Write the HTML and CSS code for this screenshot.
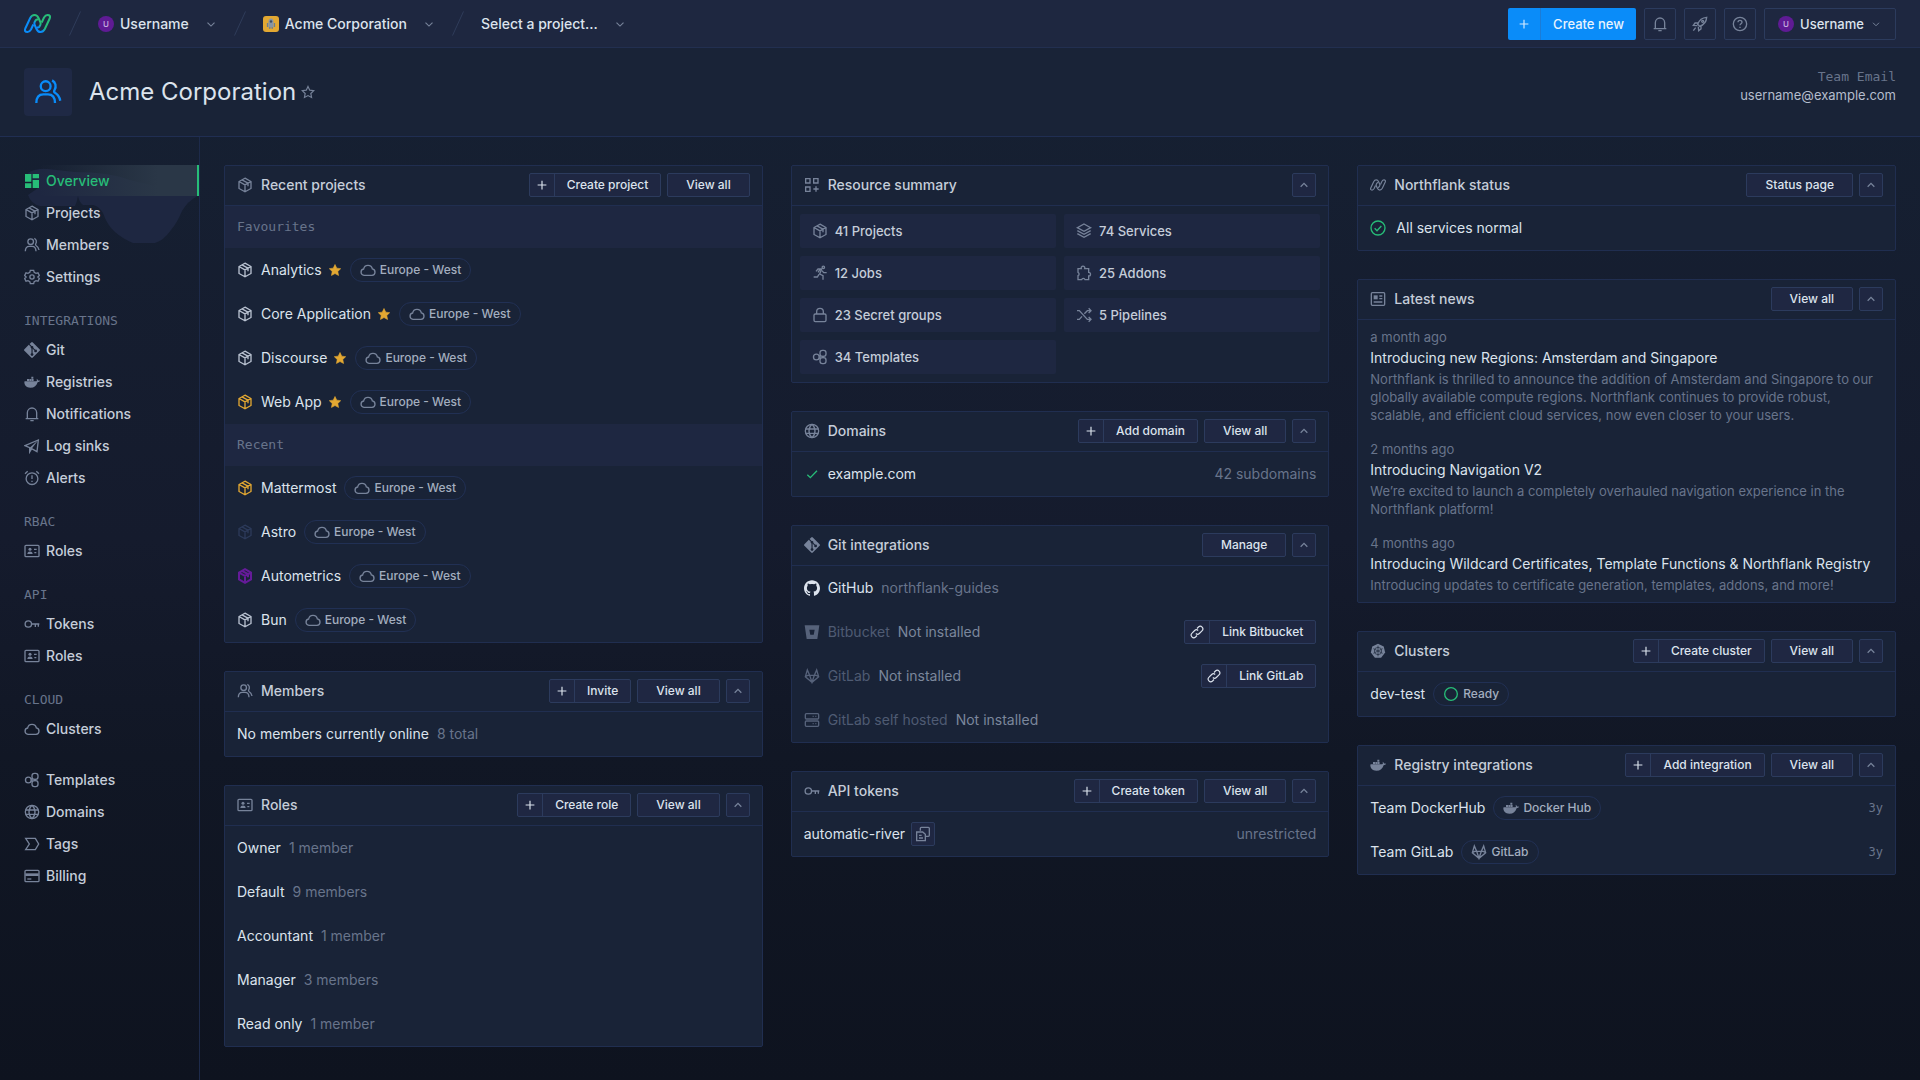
FILE: index.html
```html
<!DOCTYPE html>
<html lang="en">

<head>
  <meta charset="UTF-8" />
  <meta name="viewport" content="width=device-width, initial-scale=1.0" />
  <title>Acme Corporation - Northflank</title>
  <link rel="stylesheet" href="styles.css">
</head>

<body>

  <!-- Icon sprite -->
  <svg class="sprite" aria-hidden="true">
    <symbol id="i-cube" viewBox="0 0 24 24"><path d="M12 1.8 21 6.8v10.4l-9 5-9-5V6.8zM3 6.8l9 5 9-5M12 11.8v10.4M7.500 4.3l9 5v4.5" /></symbol>
    <symbol id="i-users" viewBox="0 0 24 24"><circle cx="10" cy="7" r="4.200" /><path d="M2 21.500c0-5 2-7.500 6-7.500h4c4 0 6 2.500 6 7.500M15.500 2c3 1.500 4 5 2 8.500-.5 1-.5 1.500.5 2.200 2.500 1.500 4 3.800 4.500 6.800" /></symbol>
    <symbol id="i-gear" viewBox="0 0 24 24"><path d="M9.500 2h5l.8 3 2.700 1.500 3-.8 2 4-2.200 2.300 2.200 2.300-2 4-3-.8-2.700 1.500-.8 3h-5l-.8-3L6 17.500l-3 .8-2-4L3.200 12 1 9.700l2-4 3 .8L8.700 5z" /><circle cx="12" cy="12" r="3.200" /></symbol>
    <symbol id="i-git" viewBox="0 0 24 24"><path class="fill" fill-rule="evenodd" d="M10.800.6 8.400 3l3 3a2 2 0 0 1 2.500 2.600l2.900 2.900a2 2 0 1 1-1.200 1.100l-2.700-2.700v7a2 2 0 1 1-1.700 0V9.800a2 2 0 0 1-1-2.600l-3-3L.6 10.800a1.700 1.700 0 0 0 0 2.400l10.200 10.200a1.700 1.700 0 0 0 2.400 0l10.200-10.200a1.700 1.700 0 0 0 0-2.400L13.200.6a1.700 1.700 0 0 0-2.400 0z" /></symbol>
    <symbol id="i-docker" viewBox="0 0 24 24"><path class="fill" d="M11 4h3v3h-3zM4.500 7.500h3v3h-3zM8 7.500h3v3H8zM11.400 7.500h3v3h-3zM1 11h17c1-.2 1.600-.8 1.200-2.500l-.2-1.500c1.500.8 2 1.800 2 2.800 1-.3 2.200-.2 3 .4-.6 1.500-2 2-3.600 2C19 17.500 15.500 20.500 9.500 20.500 3.500 20.500.5 17 .5 12z" /></symbol>
    <symbol id="i-bell" viewBox="0 0 24 24"><path d="M2.500 19h19M5 18.500V10a7 7 0 0 1 14 0v8.500M9.500 22h5" /></symbol>
    <symbol id="i-send" viewBox="0 0 24 24"><path d="M1.500 11.500 21.500 3l-2 17.500-8-4.500-3 5v-6.500z" /><path class="fill" d="m8.500 14.500 13-11.500-10 13-3 5z" /></symbol>
    <symbol id="i-alarm" viewBox="0 0 24 24"><circle cx="12" cy="13" r="8.800" /><path d="M12 8v5.500M12 16v2M1.500 5.500l4-3.500M22.500 5.500l-4-3.500" /></symbol>
    <symbol id="i-id" viewBox="0 0 24 24"><rect x="1.500" y="3.500" width="21" height="17" rx="1.500" /><circle class="fill" cx="9" cy="9.500" r="2.300" /><path class="fill" d="M5 16.500c0-5 8-5 8 0z" /><path d="M15 9.500h4M15.500 14.500h3" /></symbol>
    <symbol id="i-key" viewBox="0 0 24 24"><circle cx="6.500" cy="12" r="4.800" /><path d="M11.500 12H23M17 12v4.500M21.500 12v4" /></symbol>
    <symbol id="i-cloud" viewBox="0 0 24 24"><path d="M6 20a4.800 4.800 0 0 1-.5-9.500 6.600 6.600 0 0 1 13-.2A4.900 4.900 0 0 1 18 20z" /></symbol>
    <symbol id="i-template" viewBox="0 0 24 24"><circle cx="6.500" cy="12" r="4.300" /><rect x="12" y="2" width="9" height="9" rx="3.500" /><rect x="12" y="13" width="9" height="9" rx="3.500" /><path d="M10.500 10.500h3M10.500 13.500h3M16.500 10v4" /></symbol>
    <symbol id="i-globe" viewBox="0 0 24 24"><circle cx="12" cy="12" r="10" /><path d="M2.500 9h19M2.500 15.500h19M12 2c-6 5-6 15 0 20M12 2c6 5 6 15 0 20" /></symbol>
    <symbol id="i-tag" viewBox="0 0 24 24"><path d="M2.500 3.500H17l5 8.500-5 8.500H2.500L8 12z" /></symbol>
    <symbol id="i-card" viewBox="0 0 24 24"><rect x="1.500" y="3.500" width="21" height="17" rx="1.500" /><path class="fill" d="M2 8h20v4H2z" /><path d="M5 16.500h6" /></symbol>
    <symbol id="i-dash" viewBox="0 0 24 24"><path class="fill" d="M1.500 1.500h9.500v11.500H1.500zM13 1.500h9.500V8H13zM13 10.500h9.500v12H13zM1.500 15.500h9.500v7H1.500z" /></symbol>
    <symbol id="i-grid" viewBox="0 0 24 24"><path d="M2.500 2.500h6.500V9H2.500zM14.500 2.500H21V9h-6.500zM2.500 15h6.500v6.500H2.500zM18 14v8M14 18h8" /></symbol>
    <symbol id="i-layers" viewBox="0 0 24 24"><path d="m12 1.500 10 5.500-10 5.500L2 7zM2 11.500 12 17l10-5.500M2 16l10 5.500L22 16" /></symbol>
    <symbol id="i-run" viewBox="0 0 24 24"><circle cx="17" cy="3.500" r="1.800" /><path d="M6 9.500 9 6h5.500l-3 7.500 5 2.500v6M15 8.500l2.500 3H22M10.500 14 8 18H2.500M9 11l3.500-5" /></symbol>
    <symbol id="i-puzzle" viewBox="0 0 24 24"><path d="M3 5.500h5a2.700 2.700 0 1 1 5 0h6v5.500a2.700 2.700 0 1 1 0 5.500v5.500h-5.500a2.600 2.600 0 0 0-5 0H3v-6a2.700 2.700 0 0 0 0-5z" /></symbol>
    <symbol id="i-lock" viewBox="0 0 24 24"><rect x="3" y="10.500" width="18" height="11.500" rx="2" /><path d="M7 10.500V7a5 5 0 0 1 10 0v3.500" /></symbol>
    <symbol id="i-shuffle" viewBox="0 0 24 24"><path d="M1.500 5.500H5l12 13h5M1.500 18.500H5l4-4.500M12.500 10 17 5.500h5M19 2l3.500 3.500L19 9M19 15l3.500 3.500L19 22" /></symbol>
    <symbol id="i-github" viewBox="0 0 24 24"><path class="fill" d="M12 .297c-6.630 0-12 5.373-12 12 0 5.303 3.438 9.800 8.205 11.385.6.113.82-.258.82-.577 0-.285-.01-1.040-.015-2.040-3.338.724-4.042-1.610-4.042-1.610C4.422 18.070 3.633 17.700 3.633 17.700c-1.087-.744.084-.729.084-.729 1.205.084 1.838 1.236 1.838 1.236 1.070 1.835 2.809 1.305 3.495.998.108-.776.417-1.305.76-1.605-2.665-.3-5.466-1.332-5.466-5.930 0-1.310.465-2.380 1.235-3.220-.135-.303-.54-1.523.105-3.176 0 0 1.005-.322 3.300 1.230.96-.267 1.980-.399 3-.405 1.020.006 2.040.138 3 .405 2.280-1.552 3.285-1.230 3.285-1.230.645 1.653.24 2.873.12 3.176.765.840 1.230 1.910 1.230 3.220 0 4.610-2.805 5.625-5.475 5.920.42.360.81 1.096.81 2.220 0 1.606-.015 2.896-.015 3.286 0 .315.210.690.825.570C20.565 22.092 24 17.592 24 12.297c0-6.627-5.373-12-12-12" /></symbol>
    <symbol id="i-bitbucket" viewBox="0 0 24 24"><path class="fill" fill-rule="evenodd" d="M1 2h22l-3 20.500H4zM8 8.500l1.400 7.500h5.200L16 8.500z" /></symbol>
    <symbol id="i-gitlab" viewBox="0 0 24 24"><path d="M5 3 2 13l10 8.500L22 13 19 3l-3.500 8h-7zM8.500 11 12 21.500 15.500 11M2 13l3.500-2h3M22 13l-3.500-2h-3" /></symbol>
    <symbol id="i-server" viewBox="0 0 24 24"><rect x="2" y="2.500" width="20" height="8" rx="1.500" /><rect x="2" y="13.500" width="20" height="8" rx="1.500" /><path d="M13 6.500h1.500M17 6.500h1.500M13 17.500h1.500M17 17.500h1.500" /></symbol>
    <symbol id="i-nf" viewBox="0 0 27 19"><path d="M9.300 10.500 7 15.500Q5.500 18 3.500 18 0 18 1.300 14.500L6.200 4Q7.800 1 10.500 1 13.200 1 14.500 4L16.300 8Q17 9.600 16.200 11.200L15.200 12.800Q14.400 13.800 13 13.300" /><path d="M17.700 8.500 20 3.500Q21.500 1 23.500 1 27 1 25.700 4.500L20.800 15Q19.200 18 16.500 18 13.800 18 12.500 15L10.700 11Q10 9.400 10.800 7.800L11.800 6.200Q12.600 5.200 14 5.700" /></symbol>
    <symbol id="i-news" viewBox="0 0 24 24"><rect x="2" y="2.500" width="20" height="19" rx="1.500" /><path class="fill" d="M5.500 6.500h6v6h-6z" /><path d="M14 7.500h4.500M14 11.500h4.500M5.500 16.500h13" /></symbol>
    <symbol id="i-kube" viewBox="0 0 24 24"><path class="fill" d="m12 1 8.600 4.100 2.100 9.300-6 7.600H7.300l-6-7.600 2.100-9.300z" /><g class="cut"><circle cx="12" cy="12" r="5.500" /><path d="M12 4v16M5 8.500l14 7M19 8.500l-14 7" /></g></symbol>
    <symbol id="i-okay" viewBox="0 0 24 24"><circle cx="12" cy="12" r="10.500" /><path d="m7 12.500 3.500 3.500L17 9" /></symbol>
    <symbol id="i-ring" viewBox="0 0 24 24"><circle cx="12" cy="12" r="9.500" /></symbol>
    <symbol id="i-check" viewBox="0 0 24 24"><path d="m5 13 4.500 4.500L19.500 7" /></symbol>
    <symbol id="i-plus" viewBox="0 0 24 24"><path d="M12 4.500v15M4.500 12h15" /></symbol>
    <symbol id="i-up" viewBox="0 0 24 24"><path d="m7 14.500 5-5 5 5" /></symbol>
    <symbol id="i-down" viewBox="0 0 24 24"><path d="m6 9.500 6 6 6-6" /></symbol>
    <symbol id="i-link" viewBox="0 0 24 24"><path d="M10 14.500a4.300 4.300 0 0 0 6 0l4.500-4.500a4.300 4.300 0 0 0-6-6.500l-2.500 2.500M14 9.500a4.300 4.300 0 0 0-6 0L3.500 14a4.300 4.300 0 0 0 6 6.500L12 18" /></symbol>
    <symbol id="i-copy" viewBox="0 0 24 24"><path d="M8 7V3.500C8 2.500 8.500 2 9.500 2H20c1 0 1.500.5 1.500 1.500V14c0 1-.5 1.500-1.500 1.500h-3.500" /><path d="M2.500 9h9l4 3.500V22h-13zM6 14h4M6 18h6" /></symbol>
    <symbol id="i-star" viewBox="0 0 24 24"><path d="m12 2.500 3 6.300 6.800.9-5 4.800 1.300 6.900-6.100-3.300-6.100 3.300 1.300-6.900-5-4.800 6.800-.9z" /></symbol>
    <symbol id="i-rocket" viewBox="0 0 24 24"><path d="M8.500 12.500C11 5.500 15 2.500 22 2c-.5 7-3.500 11-10.500 13.500zM9 10.500H4.500L2 14l6 .500M13.500 15v4.500L10 22l-.5-6M5.500 17.500 2 22" /><circle cx="16" cy="8" r="1.500" /></symbol>
    <symbol id="i-help" viewBox="0 0 24 24"><circle cx="12" cy="12" r="10" /><path d="M9 9.500c0-4 6-4 6-.2 0 2.200-3 2.400-3 4.700M12 16v2" /></symbol>
  </svg>

  <header class="topbar">
    <a class="logo" href="#" aria-label="Northflank">
      <svg viewBox="0 0 27 19">
        <defs>
          <linearGradient id="nf-gradient" gradientUnits="userSpaceOnUse" x1="12" y1="11" x2="15" y2="8">
            <stop offset="0" stop-color="#0a8cf9" />
            <stop offset="1" stop-color="#27bd78" />
          </linearGradient>
        </defs>
        <g stroke="url(#nf-gradient)">
          <use href="#i-nf" width="27" height="19" />
        </g>
      </svg>
    </a>
    <nav class="crumbs" aria-label="Breadcrumb">
      <svg class="slash" viewBox="0 0 12 25"><path d="M11.500.5.5 24.500" /></svg>
      <button class="crumb"><span class="avatar">U</span>Username<svg class="icon chevron"><use href="#i-down" /></svg></button>
      <svg class="slash" viewBox="0 0 12 25"><path d="M11.500.5.5 24.500" /></svg>
      <button class="crumb">
        <svg class="team-logo" viewBox="0 0 16 16">
          <rect width="16" height="16" rx="3" fill="#e3a832" />
          <path d="M5.500 6q0-3.500 2.500-3.500t2.500 3.500v5.500h-5z" fill="#8795a5" />
          <path d="M4.500 7v4M11.500 7v4M6.800 11v2M9.200 11v2" stroke="#6b7c90" stroke-width="1.200" />
          <circle cx="8" cy="5.500" r="1.200" fill="#3d4d66" />
        </svg>Acme Corporation<svg class="icon chevron"><use href="#i-down" /></svg>
      </button>
      <svg class="slash" viewBox="0 0 12 25"><path d="M11.500.5.5 24.500" /></svg>
      <button class="crumb">Select a project...<svg class="icon chevron"><use href="#i-down" /></svg></button>
    </nav>
    <div class="tools">
      <button class="create"><span class="create-plus"><svg class="icon"><use href="#i-plus" /></svg></span><span class="create-text">Create new</span></button>
      <button class="tool" aria-label="Notifications"><svg class="icon"><use href="#i-bell" /></svg></button>
      <button class="tool" aria-label="What's new"><svg class="icon"><use href="#i-rocket" /></svg></button>
      <button class="tool" aria-label="Help"><svg class="icon"><use href="#i-help" /></svg></button>
      <button class="tool user"><span class="avatar">U</span>Username<svg class="icon chevron"><use href="#i-down" /></svg></button>
    </div>
  </header>

  <div class="page-head">
    <div class="page-icon"><svg class="icon"><use href="#i-users" /></svg></div>
    <h1>Acme Corporation</h1>
    <button class="favourite" aria-label="Add to favourites"><svg class="icon"><use href="#i-star" /></svg></button>
    <div class="team-email">
      <span class="mono">Team Email</span>
      <span>username@example.com</span>
    </div>
  </div>

  <div class="layout">
    <nav class="sidebar" aria-label="Team">
      <svg class="glow" viewBox="0 0 199 80" aria-hidden="true"><path d="M28 8q8-5 20-4l27 3q35 0 55 8l67 16-1 1q-8 4-14 14-5 12-11 19-8 11-16 13h-22q-10-4-18-11-8-7-12-19-4-7-10-8H83q-4-3-5-9-1 6-3 10H40q-9-2-12-11l10-7q-8-8-10-15z" /></svg>
      <a class="nav-item active" href="#"><svg class="icon"><use href="#i-dash" /></svg>Overview</a>
      <a class="nav-item" href="#"><svg class="icon"><use href="#i-cube" /></svg>Projects</a>
      <a class="nav-item" href="#"><svg class="icon"><use href="#i-users" /></svg>Members</a>
      <a class="nav-item" href="#"><svg class="icon"><use href="#i-gear" /></svg>Settings</a>

      <h2 class="nav-label mono">INTEGRATIONS</h2>
      <a class="nav-item" href="#"><svg class="icon"><use href="#i-git" /></svg>Git</a>
      <a class="nav-item" href="#"><svg class="icon"><use href="#i-docker" /></svg>Registries</a>
      <a class="nav-item" href="#"><svg class="icon"><use href="#i-bell" /></svg>Notifications</a>
      <a class="nav-item" href="#"><svg class="icon"><use href="#i-send" /></svg>Log sinks</a>
      <a class="nav-item" href="#"><svg class="icon"><use href="#i-alarm" /></svg>Alerts</a>

      <h2 class="nav-label mono">RBAC</h2>
      <a class="nav-item" href="#"><svg class="icon"><use href="#i-id" /></svg>Roles</a>

      <h2 class="nav-label mono">API</h2>
      <a class="nav-item" href="#"><svg class="icon"><use href="#i-key" /></svg>Tokens</a>
      <a class="nav-item" href="#"><svg class="icon"><use href="#i-id" /></svg>Roles</a>

      <h2 class="nav-label mono">CLOUD</h2>
      <a class="nav-item nav-last" href="#"><svg class="icon"><use href="#i-cloud" /></svg>Clusters</a>

      <a class="nav-item" href="#"><svg class="icon"><use href="#i-template" /></svg>Templates</a>
      <a class="nav-item" href="#"><svg class="icon"><use href="#i-globe" /></svg>Domains</a>
      <a class="nav-item" href="#"><svg class="icon"><use href="#i-tag" /></svg>Tags</a>
      <a class="nav-item" href="#"><svg class="icon"><use href="#i-card" /></svg>Billing</a>
    </nav>

    <main class="columns">
      <div class="column">
        <section class="card">
          <div class="card-head">
            <svg class="icon"><use href="#i-cube" /></svg>
            <h2>Recent projects</h2>
            <button class="btn split"><span class="btn-icon"><svg class="icon"><use href="#i-plus" /></svg></span><span class="btn-text">Create project</span></button>
            <button class="btn">View all</button>
          </div>
          <h3 class="band mono">Favourites</h3>
          <div class="row"><svg class="icon light"><use href="#i-cube" /></svg><a href="#">Analytics</a><svg class="icon star"><use href="#i-star" /></svg><span class="pill"><svg class="icon"><use href="#i-cloud" /></svg>Europe - West</span></div>
          <div class="row"><svg class="icon light"><use href="#i-cube" /></svg><a href="#">Core Application</a><svg class="icon star"><use href="#i-star" /></svg><span class="pill"><svg class="icon"><use href="#i-cloud" /></svg>Europe - West</span></div>
          <div class="row"><svg class="icon light"><use href="#i-cube" /></svg><a href="#">Discourse</a><svg class="icon star"><use href="#i-star" /></svg><span class="pill"><svg class="icon"><use href="#i-cloud" /></svg>Europe - West</span></div>
          <div class="row"><svg class="icon yellow"><use href="#i-cube" /></svg><a href="#">Web App</a><svg class="icon star"><use href="#i-star" /></svg><span class="pill"><svg class="icon"><use href="#i-cloud" /></svg>Europe - West</span></div>
          <h3 class="band mono">Recent</h3>
          <div class="row"><svg class="icon yellow"><use href="#i-cube" /></svg><a href="#">Mattermost</a><span class="pill"><svg class="icon"><use href="#i-cloud" /></svg>Europe - West</span></div>
          <div class="row"><svg class="icon navy"><use href="#i-cube" /></svg><a href="#">Astro</a><span class="pill"><svg class="icon"><use href="#i-cloud" /></svg>Europe - West</span></div>
          <div class="row"><svg class="icon purple"><use href="#i-cube" /></svg><a href="#">Autometrics</a><span class="pill"><svg class="icon"><use href="#i-cloud" /></svg>Europe - West</span></div>
          <div class="row"><svg class="icon light"><use href="#i-cube" /></svg><a href="#">Bun</a><span class="pill"><svg class="icon"><use href="#i-cloud" /></svg>Europe - West</span></div>
        </section>

        <section class="card">
          <div class="card-head">
            <svg class="icon"><use href="#i-users" /></svg>
            <h2>Members</h2>
            <button class="btn split"><span class="btn-icon"><svg class="icon"><use href="#i-plus" /></svg></span><span class="btn-text">Invite</span></button>
            <button class="btn">View all</button>
            <button class="btn square" aria-label="Collapse"><svg class="icon"><use href="#i-up" /></svg></button>
          </div>
          <div class="row"><span>No members currently online</span><span class="muted">8 total</span></div>
        </section>

        <section class="card">
          <div class="card-head">
            <svg class="icon"><use href="#i-id" /></svg>
            <h2>Roles</h2>
            <button class="btn split"><span class="btn-icon"><svg class="icon"><use href="#i-plus" /></svg></span><span class="btn-text">Create role</span></button>
            <button class="btn">View all</button>
            <button class="btn square" aria-label="Collapse"><svg class="icon"><use href="#i-up" /></svg></button>
          </div>
          <div class="row"><a href="#">Owner</a><span class="muted">1 member</span></div>
          <div class="row"><a href="#">Default</a><span class="muted">9 members</span></div>
          <div class="row"><a href="#">Accountant</a><span class="muted">1 member</span></div>
          <div class="row"><a href="#">Manager</a><span class="muted">3 members</span></div>
          <div class="row"><a href="#">Read only</a><span class="muted">1 member</span></div>
        </section>
      </div>

      <div class="column">
        <section class="card">
          <div class="card-head">
            <svg class="icon"><use href="#i-grid" /></svg>
            <h2>Resource summary</h2>
            <button class="btn square" aria-label="Collapse"><svg class="icon"><use href="#i-up" /></svg></button>
          </div>
          <div class="resources">
            <a class="resource" href="#"><svg class="icon"><use href="#i-cube" /></svg>41 Projects</a>
            <a class="resource" href="#"><svg class="icon"><use href="#i-layers" /></svg>74 Services</a>
            <a class="resource" href="#"><svg class="icon"><use href="#i-run" /></svg>12 Jobs</a>
            <a class="resource" href="#"><svg class="icon"><use href="#i-puzzle" /></svg>25 Addons</a>
            <a class="resource" href="#"><svg class="icon"><use href="#i-lock" /></svg>23 Secret groups</a>
            <a class="resource" href="#"><svg class="icon"><use href="#i-shuffle" /></svg>5 Pipelines</a>
            <a class="resource" href="#"><svg class="icon"><use href="#i-template" /></svg>34 Templates</a>
          </div>
        </section>

        <section class="card">
          <div class="card-head">
            <svg class="icon"><use href="#i-globe" /></svg>
            <h2>Domains</h2>
            <button class="btn split"><span class="btn-icon"><svg class="icon"><use href="#i-plus" /></svg></span><span class="btn-text">Add domain</span></button>
            <button class="btn">View all</button>
            <button class="btn square" aria-label="Collapse"><svg class="icon"><use href="#i-up" /></svg></button>
          </div>
          <div class="row"><svg class="icon green"><use href="#i-check" /></svg><a href="#">example.com</a><span class="muted end">42 subdomains</span></div>
        </section>

        <section class="card">
          <div class="card-head">
            <svg class="icon"><use href="#i-git" /></svg>
            <h2>Git integrations</h2>
            <button class="btn">Manage</button>
            <button class="btn square" aria-label="Collapse"><svg class="icon"><use href="#i-up" /></svg></button>
          </div>
          <div class="row"><svg class="icon white"><use href="#i-github" /></svg><span>GitHub</span><span class="muted">northflank-guides</span></div>
          <div class="row"><svg class="icon dim"><use href="#i-bitbucket" /></svg><span class="dim">Bitbucket</span><span class="soft">Not installed</span><button class="btn split end"><span class="btn-icon"><svg class="icon"><use href="#i-link" /></svg></span><span class="btn-text">Link Bitbucket</span></button></div>
          <div class="row"><svg class="icon dim"><use href="#i-gitlab" /></svg><span class="dim">GitLab</span><span class="soft">Not installed</span><button class="btn split end"><span class="btn-icon"><svg class="icon"><use href="#i-link" /></svg></span><span class="btn-text">Link GitLab</span></button></div>
          <div class="row"><svg class="icon dim"><use href="#i-server" /></svg><span class="dim">GitLab self hosted</span><span class="soft">Not installed</span></div>
        </section>

        <section class="card">
          <div class="card-head">
            <svg class="icon"><use href="#i-key" /></svg>
            <h2>API tokens</h2>
            <button class="btn split"><span class="btn-icon"><svg class="icon"><use href="#i-plus" /></svg></span><span class="btn-text">Create token</span></button>
            <button class="btn">View all</button>
            <button class="btn square" aria-label="Collapse"><svg class="icon"><use href="#i-up" /></svg></button>
          </div>
          <div class="row token"><a href="#">automatic-river</a><button class="btn square" aria-label="Copy token"><svg class="icon"><use href="#i-copy" /></svg></button><span class="muted end">unrestricted</span></div>
        </section>
      </div>

      <div class="column">
        <section class="card">
          <div class="card-head">
            <svg class="icon"><use href="#i-nf" /></svg>
            <h2>Northflank status</h2>
            <button class="btn">Status page</button>
            <button class="btn square" aria-label="Collapse"><svg class="icon"><use href="#i-up" /></svg></button>
          </div>
          <div class="row status"><svg class="icon green"><use href="#i-okay" /></svg><span>All services normal</span></div>
        </section>

        <section class="card">
          <div class="card-head">
            <svg class="icon"><use href="#i-news" /></svg>
            <h2>Latest news</h2>
            <button class="btn">View all</button>
            <button class="btn square" aria-label="Collapse"><svg class="icon"><use href="#i-up" /></svg></button>
          </div>
          <div class="news">
            <article>
              <time>a month ago</time>
              <h3><a href="#">Introducing new Regions: Amsterdam and Singapore</a></h3>
              <p>Northflank is thrilled to announce the addition of Amsterdam and Singapore to our globally available compute regions. Northflank continues to provide robust, scalable, and efficient cloud services, now even closer to your users.</p>
            </article>
            <article>
              <time>2 months ago</time>
              <h3><a href="#">Introducing Navigation V2</a></h3>
              <p>We’re excited to launch a completely overhauled navigation experience in the Northflank platform!</p>
            </article>
            <article>
              <time>4 months ago</time>
              <h3><a href="#">Introducing Wildcard Certificates, Template Functions &amp; Northflank Registry</a></h3>
              <p>Introducing updates to certificate generation, templates, addons, and more!</p>
            </article>
          </div>
        </section>

        <section class="card">
          <div class="card-head">
            <svg class="icon"><use href="#i-kube" /></svg>
            <h2>Clusters</h2>
            <button class="btn split"><span class="btn-icon"><svg class="icon"><use href="#i-plus" /></svg></span><span class="btn-text">Create cluster</span></button>
            <button class="btn">View all</button>
            <button class="btn square" aria-label="Collapse"><svg class="icon"><use href="#i-up" /></svg></button>
          </div>
          <div class="row"><a href="#">dev-test</a><span class="pill"><svg class="icon green"><use href="#i-ring" /></svg>Ready</span></div>
        </section>

        <section class="card">
          <div class="card-head">
            <svg class="icon"><use href="#i-docker" /></svg>
            <h2>Registry integrations</h2>
            <button class="btn split"><span class="btn-icon"><svg class="icon"><use href="#i-plus" /></svg></span><span class="btn-text">Add integration</span></button>
            <button class="btn">View all</button>
            <button class="btn square" aria-label="Collapse"><svg class="icon"><use href="#i-up" /></svg></button>
          </div>
          <div class="row"><a href="#">Team DockerHub</a><span class="pill"><svg class="icon"><use href="#i-docker" /></svg>Docker Hub</span><span class="age mono end">3y</span></div>
          <div class="row"><a href="#">Team GitLab</a><span class="pill"><svg class="icon"><use href="#i-gitlab" /></svg>GitLab</span><span class="age mono end">3y</span></div>
        </section>
      </div>
    </main>
  </div>

</body>

</html>
```
FILE: styles.css
```css
* {
  box-sizing: border-box;
}

html {
  min-height: 100%;
  background: linear-gradient(#162133, #151b2d 50%, #111725 70%, #0e131f);
}

body {
  margin: 0;
  min-height: 100vh;
  display: flex;
  flex-direction: column;
  font-family: Inter, "Liberation Sans", sans-serif;
  font-size: 14px;
  line-height: 18px;
  color: #dce3ed;
}

h1,
h2,
h3,
p {
  margin: 0;
  font-size: 14px;
  font-weight: 400;
}

a {
  color: inherit;
  text-decoration: none;
}

button {
  font-family: inherit;
  font-size: 14px;
  font-weight: 500;
  line-height: 18px;
  color: inherit;
  background: none;
  border: none;
  padding: 0;
  cursor: pointer;
}

.mono {
  font-family: "DejaVu Sans Mono", "Liberation Mono", monospace;
  font-size: 13px;
  color: #68748b;
}

/* Icons */
.sprite {
  position: absolute;
  width: 0;
  height: 0;
}

.icon {
  width: 16px;
  height: 16px;
  flex: none;
  color: #77839a;
  fill: none;
  stroke: currentColor;
  stroke-width: 2;
}

.fill {
  fill: currentColor;
  stroke: none;
}

.cut {
  stroke: #1a2438;
  stroke-width: 1;
}

.icon.light {
  color: #b9c2d1;
}

.icon.white {
  color: #dce3ed;
}

.icon.yellow {
  color: #e3a832;
}

.icon.navy {
  color: #2c3a5a;
}

.icon.purple {
  color: #651b99;
  stroke-width: 3;
}

.icon.green {
  color: #27bd78;
}

.icon.dim {
  color: #56627a;
}

.icon.star {
  color: #e3a832;
  fill: currentColor;
  stroke-width: 1;
  width: 14px;
  margin-left: -2px;
}

/* Top bar */
.topbar {
  display: flex;
  align-items: center;
  height: 48px;
  padding: 0 24px;
  background: #1e2740;
  border-bottom: 1px solid #222f50;
}

.logo {
  display: flex;
  margin-right: 18px;
}

.logo svg {
  width: 27px;
  height: 19px;
  fill: none;
  stroke-width: 2;
}

.crumbs {
  display: flex;
  align-items: center;
}

.slash {
  width: 12px;
  height: 25px;
  fill: none;
  stroke: #2f3c5a;
}

.crumb {
  display: flex;
  align-items: center;
  gap: 6px;
  padding: 0 15px 0 17px;
}

.avatar {
  width: 16px;
  height: 16px;
  border-radius: 50%;
  background: #5f1b94;
  color: #c9b3e0;
  font-size: 8px;
  line-height: 16px;
  text-align: center;
}

.team-logo {
  width: 16px;
  height: 16px;
}

.chevron {
  width: 14px;
  margin-left: 9px;
  margin-right: 1px;
}

.tools {
  display: flex;
  gap: 8px;
  margin-left: auto;
}

.create {
  display: flex;
  height: 32px;
  font-size: 13px;
  color: #e8f3fd;
  background: #0a8cf9;
  border-radius: 2px;
}

.create-plus {
  display: flex;
  align-items: center;
  justify-content: center;
  width: 33px;
  height: 32px;
  border-right: 1px solid #1c7cd6;
}

.create-plus .icon {
  width: 14px;
  color: #d5eaff;
}

.create-text {
  padding: 7px 12px;
}

.tool {
  display: flex;
  align-items: center;
  justify-content: center;
  width: 32px;
  height: 32px;
  border: 1px solid #2c3b5d;
  border-radius: 2px;
}

.user {
  width: 132px;
  gap: 6px;
  font-size: 13px;
}

.user .chevron {
  width: 12px;
  margin: 0;
}

/* Page header */
.page-head {
  display: flex;
  align-items: center;
  height: 89px;
  padding: 0 24px;
  background: #192337;
  border-bottom: 1px solid #202e52;
}

.page-icon {
  display: flex;
  align-items: center;
  justify-content: center;
  width: 48px;
  height: 48px;
  margin-right: 17px;
  background: #1f2945;
  border-radius: 4px;
}

.page-icon .icon {
  width: 28px;
  height: 28px;
  color: #0a8cf9;
}

.page-head h1 {
  font-size: 24px;
  line-height: 32px;
}

.favourite {
  display: flex;
  margin-left: 5px;
}

.favourite .icon {
  width: 14px;
}

.team-email {
  display: flex;
  flex-direction: column;
  align-self: flex-start;
  margin-top: 20px;
  margin-left: auto;
  text-align: right;
  font-size: 13px;
  color: #b4bdcc;
}

/* Layout */
.layout {
  display: flex;
  flex: 1;
}

.sidebar {
  position: relative;
  display: flex;
  flex-direction: column;
  gap: 1px;
  width: 200px;
  flex: none;
  padding: 28px 0;
  border-right: 1px solid #1d2a4a;
}

/* soft shape behind the first links */
.glow {
  position: absolute;
  top: 28px;
  left: 0;
  width: 199px;
  height: 80px;
  fill: #1e2741;
  z-index: -1;
}

.nav-item {
  display: flex;
  align-items: center;
  gap: 6px;
  height: 31px;
  padding-left: 24px;
  font-weight: 500;
  color: #c5cdd9;
}

.nav-item.active {
  color: #27bd78;
  border-right: 2px solid #27bd78;
  background: linear-gradient(90deg, transparent 20%, #2a3747 80%);
}

.nav-item.active .icon {
  color: #27bd78;
}

.nav-label {
  margin: 19px 24px 3px;
}

.nav-last {
  margin-bottom: 19px;
}

.columns {
  display: grid;
  grid-template-columns: repeat(3, minmax(0, 1fr));
  align-items: start;
  gap: 28px;
  flex: 1;
  padding: 28px 24px;
}

.column {
  display: flex;
  flex-direction: column;
  gap: 28px;
}

/* Cards */
.card {
  background: #192337;
  border: 1px solid #202e50;
  border-radius: 2px;
}

.card-head {
  display: flex;
  align-items: center;
  gap: 6px;
  height: 40px;
  padding: 0 12px 1px;
  border-bottom: 1px solid #202e50;
}

.card-head h2 {
  flex: 1;
  margin-left: 2px;
  font-weight: 500;
  color: #c5cdd9;
}

.btn {
  display: flex;
  align-items: center;
  justify-content: center;
  height: 24px;
  padding: 0 18px;
  font-size: 12px;
  background: #1f2742;
  border: 1px solid #2c3b5d;
  border-radius: 2px;
}

.btn.split {
  padding: 0;
}

.btn-icon {
  display: flex;
  align-items: center;
  justify-content: center;
  width: 25px;
  height: 22px;
  border-right: 1px solid #2c3b5d;
}

.btn-icon .icon {
  width: 14px;
  height: 14px;
  color: #dce3ed;
}

.btn-text {
  padding: 0 12px;
}

.btn.square {
  width: 24px;
  padding: 0;
}

.band {
  height: 42px;
  padding: 12px;
  background: #1e2741;
}

.row {
  display: flex;
  align-items: center;
  gap: 8px;
  height: 44px;
  padding: 0 12px;
}

.row.token {
  gap: 6px;
}

.row.status {
  gap: 10px;
}

.end {
  margin-left: auto;
}

.muted {
  color: #68748b;
}

.soft {
  color: #7b879c;
}

.dim {
  color: #4f5b73;
}

.pill {
  display: flex;
  align-items: center;
  gap: 4px;
  height: 24px;
  padding: 0 9px;
  font-size: 12px;
  font-weight: 500;
  color: #a3aebf;
  border: 1px solid #213054;
  border-radius: 12px;
}

.age {
  font-size: 12px;
}

/* Resource summary */
.resources {
  display: grid;
  grid-template-columns: 1fr 1fr;
  gap: 8px;
  padding: 8px;
}

.resource {
  display: flex;
  align-items: center;
  gap: 7px;
  height: 34px;
  padding: 0 12px;
  font-size: 13px;
  font-weight: 500;
  color: #c5cdd9;
  background: #1e2741;
  border-radius: 2px;
}

/* News */
.news {
  display: flex;
  flex-direction: column;
  gap: 16px;
  padding: 8px 12px;
  font-size: 13px;
  color: #68748b;
}

.news article {
  display: flex;
  flex-direction: column;
  gap: 3px;
}

.news h3 {
  color: #dce3ed;
}

.news p {
  font-size: 13px;
}
```
